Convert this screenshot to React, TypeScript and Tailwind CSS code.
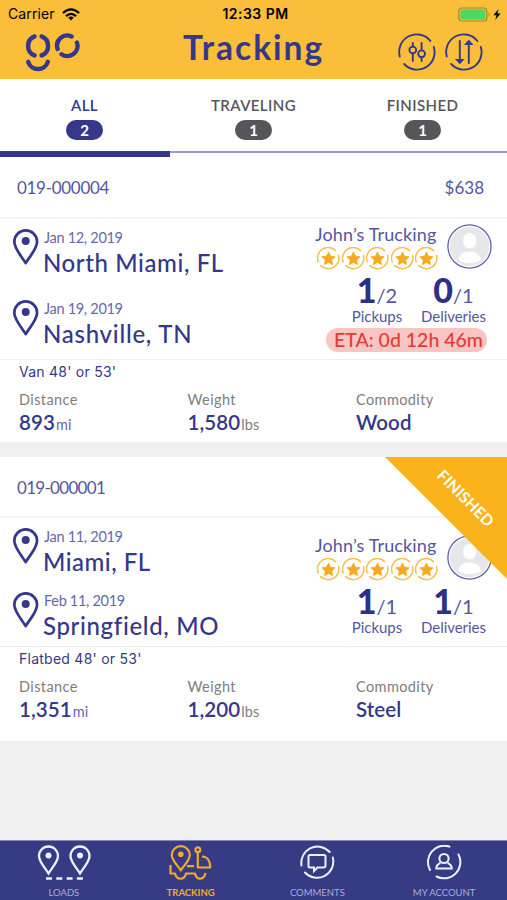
import { ReactNode } from "react"

interface Stop {
  date: string
  city: string
  tracking: string
}

interface Load {
  id: string
  price?: string
  stops: Stop[]
  pickups: [string, string]
  deliveries: [string, string]
  eta?: string
  trailer: string
  distance: string
  weight: string
  commodity: string
  finished?: boolean
}

const loads: Load[] = [
  {
    id: "019-000004",
    price: "$638",
    stops: [
      { date: "Jan 12, 2019", city: "North Miami, FL", tracking: "tracking-[0.6px]" },
      { date: "Jan 19, 2019", city: "Nashville, TN", tracking: "tracking-[0.75px]" },
    ],
    pickups: ["1", "2"],
    deliveries: ["0", "1"],
    eta: "ETA: 0d 12h 46m",
    trailer: "Van 48' or 53'",
    distance: "893",
    weight: "1,580",
    commodity: "Wood",
  },
  {
    id: "019-000001",
    stops: [
      { date: "Jan 11, 2019", city: "Miami, FL", tracking: "tracking-[0.5px]" },
      { date: "Feb 11, 2019", city: "Springfield, MO", tracking: "tracking-[0.65px]" },
    ],
    pickups: ["1", "1"],
    deliveries: ["1", "1"],
    trailer: "Flatbed 48' or 53'",
    distance: "1,351",
    weight: "1,200",
    commodity: "Steel",
    finished: true,
  },
]

export default function App() {
  return (
    <div className="w-[507px] h-[900px] flex flex-col overflow-hidden bg-[#f0f0f0] font-['Lato',sans-serif] text-[#34378a] whitespace-nowrap">
      <Header />
      <Tabs />
      <main className="flex-1 flex flex-col gap-[15px]">
        {loads.map((load) => (
          <LoadCard key={load.id} load={load} />
        ))}
      </main>
      <BottomNav />
    </div>
  )
}

function Header() {
  return (
    <header className="h-[79px] shrink-0 bg-[#fabe3a] flex flex-col">
      {/* Status bar */}
      <div className="h-7 grid grid-cols-3 items-center text-black font-['Inter',sans-serif] text-[14px] leading-none">
        <div className="flex items-center gap-[7px] pl-[8px]">
          <span className="tracking-[0.1px]">Carrier</span>
          <svg width="18" height="13" viewBox="0 0 18 13" fill="none" stroke="black" strokeWidth="2.3">
            <path d="M1 5 Q9 -2.2 17 5" />
            <path d="M4 8.2 Q9 3.6 14 8.2" />
            <path d="M9 12.4 L6.2 9.4 Q9 7.4 11.8 9.4 Z" fill="black" stroke="none" />
          </svg>
        </div>
        <span className="text-center font-semibold tracking-[0.45px] pl-[4px]">12:33 PM</span>
        <div className="flex justify-end items-center pr-[5px]">
          <svg width="44" height="15" viewBox="0 0 44 15">
            <rect x="0.8" y="1" width="28" height="13" rx="3" fill="none" stroke="#a98522" strokeWidth="1.2" />
            <rect x="2.4" y="2.6" width="24.8" height="9.8" rx="1.4" fill="#4bd963" />
            <path d="M30.6 5.4 q2 2.1 0 4.2z" fill="#a98522" />
            <path d="M40.6 2 L35.4 8.2 H38.6 L37.2 13 L42.6 6.6 H39.3 Z" fill="black" />
          </svg>
        </div>
      </div>

      <div className="flex-1 flex items-start pl-[24px] pr-[24px]">
        <svg className="mt-[5px]" width="56" height="40" viewBox="0 0 56 40" fill="none" stroke="#34378a" strokeWidth="4.4" strokeLinecap="round">
          <path d="M10.6 3.4 A10.2 10.2 0 0 0 10.6 22.4" />
          <path d="M17.6 3.4 A10.2 10.2 0 0 1 17.6 22.4" />
          <path d="M4.2 28.8 C7 38.4 20.8 38.4 23.8 28.8" />
          <path d="M33.6 16 A10.2 10.2 0 0 1 47.6 3.5" />
          <path d="M53 9.6 A10.2 10.2 0 0 1 37.5 21.2" />
        </svg>
        <h1 className="ml-[103px] text-[33.5px] leading-[38px] font-bold tracking-[2px]">Tracking</h1>
        <div className="ml-auto flex gap-[9px] mt-[5px]">
          <RingIcon>
            <path d="M14.8 10v3.6M14.8 20.4v7.6M23.6 10v7.4M23.6 24.2v3.8" strokeWidth="1.9" />
            <circle cx="14.8" cy="17" r="3.4" />
            <circle cx="23.6" cy="20.8" r="3.4" />
          </RingIcon>
          <RingIcon>
            <path d="M14.8 8v21M23.8 9.500v20.500" strokeWidth="1.9" />
            <path d="M12.2 27 L14.8 29.8 L17.4 27Z M21.2 11 L23.8 8.2 L26.4 11Z" fill="currentColor" />
          </RingIcon>
        </div>
      </div>
    </header>
  )
}

function RingIcon({ children }: { children: ReactNode }) {
  return (
    <svg width="38" height="38" viewBox="0 0 38 38" fill="none" stroke="currentColor" strokeWidth="1.9" strokeLinecap="round">
      <path d="M1.8 23.5 A17.5 17.5 0 0 1 32.4 8" />
      <path d="M35.8 14 A17.5 17.5 0 0 1 6.2 31" />
      {children}
    </svg>
  )
}

function Tabs() {
  return (
    <div className="h-[78px] shrink-0 bg-white">
      <div className="h-[72px] grid grid-cols-3">
        <Tab label="ALL" count={2} active />
        <Tab label="TRAVELING" count={1} />
        <Tab label="FINISHED" count={1} />
      </div>
      <div className="h-[6px] border-t-2 border-[#9c9cc4]">
        <div className="w-[169.5px] h-[6px] -mt-[2px] bg-[#34378a]" />
      </div>
    </div>
  )
}

function Tab({ label, count, active = false }: { label: string; count: number; active?: boolean }) {
  return (
    <div className={`flex flex-col items-center pt-[16px] ${active ? "text-[#34378a]" : "text-[#55565a]"}`}>
      <span className="text-[15px] leading-5 font-semibold tracking-[0.4px]">{label}</span>
      <span className={`mt-[5px] w-[37px] h-5 rounded-full text-center text-white text-[15px] leading-5 font-bold ${active ? "bg-[#34378a]" : "bg-[#55565a]"}`}>
        {count}
      </span>
    </div>
  )
}

function LoadCard({ load }: { load: Load }) {
  return (
    <section className="relative bg-white">
      <div className={`flex items-center justify-between pl-[17px] pr-[23px] pt-[2px] text-[17px] text-[#5456a0] border-b-2 border-[#f5f5f5] ${load.finished ? "h-[61px]" : "h-[62px]"}`}>
        <span className={load.finished ? "tracking-[-0.7px]" : "tracking-[-0.3px]"}>{load.id}</span>
        <span>{load.price}</span>
      </div>

      <div className={`flex justify-between border-b border-[#ededed] ${load.finished ? "h-[129px]" : "h-[141px]"}`}>
        <div className={`pl-[12px] pt-[8px] flex flex-col ${load.finished ? "gap-[14px]" : "gap-[20.5px]"}`}>
          {load.stops.map((stop) => (
            <div key={stop.date} className="h-[50px] flex gap-[3px]">
              <Pin />
              <div>
                <p className="pl-px text-[14.5px] leading-[22px] text-[#6668aa] tracking-[-0.3px]">{stop.date}</p>
                <p className={`text-[24px] leading-[27px] font-medium ${stop.tracking}`}>{stop.city}</p>
              </div>
            </div>
          ))}
        </div>

        <div className={`w-[193px] ${load.finished ? "pt-[16px]" : "pt-[4px]"}`}>
          <div className="flex gap-[9px]">
            <div className="w-[124px]">
              <p className="pl-px text-[18px] leading-[23px] text-[#5456a0] tracking-[0.15px]">John’s Trucking</p>
              <div className="flex gap-[1.5px] pl-[3px] mt-px">
                {[1, 2, 3, 4, 5].map((n) => (
                  <Star key={n} />
                ))}
              </div>
            </div>
            <Avatar />
          </div>
          <div className="flex mt-[3px]">
            <Counter value={load.pickups} label="Pickups" width="w-[126px]" />
            <Counter value={load.deliveries} label="Deliveries" width="w-[27px]" />
          </div>
          {load.eta && (
            <p className="ml-[12px] mt-[2px] w-[161px] h-6 rounded-full bg-[#f8c5c2] text-[#e33c35] text-center text-[19.5px] leading-6 font-medium pl-[4px]">
              {load.eta}
            </p>
          )}
        </div>
      </div>

      <div className={`pl-[19px] ${load.finished ? "h-[94px]" : "h-[82px]"}`}>
        <p className="pt-[2px] text-[14px] leading-5 font-['Inter',sans-serif] tracking-[0.25px]">{load.trailer}</p>
        <div className="grid grid-cols-[168.5px_168.5px_auto] mt-[8px]">
          <Spec label="Distance" value={load.distance} unit="mi" />
          <Spec label="Weight" value={load.weight} unit="lbs" />
          <Spec label="Commodity" value={load.commodity} />
        </div>
      </div>

      {load.finished && (
        <div className="absolute top-0 right-0 w-[122px] h-[122px] bg-[#fab31a] [clip-path:polygon(0_0,100%_0,100%_100%)]">
          <span className="absolute left-[31px] top-[31px] w-[100px] text-center rotate-45 text-white text-[15.5px] leading-5 font-bold tracking-[0.2px]">
            FINISHED
          </span>
        </div>
      )}
    </section>
  )
}

function Pin() {
  return (
    <svg className="mt-[2px] shrink-0" width="28" height="38" viewBox="0 0 28 38">
      <path d="M13.7 34.2 C10.5 28.3 2.3 20 2.3 12.8 A11.4 11.4 0 0 1 25.1 12.8 C25.1 20 17 28.3 13.7 34.2 Z" fill="none" stroke="#34378a" strokeWidth="2.7" strokeLinejoin="round" />
      <circle cx="13.7" cy="12" r="4" fill="#34378a" />
    </svg>
  )
}

function Star() {
  return (
    <svg width="23" height="23" viewBox="0 0 23 23">
      <path d="M1.2 14.8 A10.6 10.6 0 0 1 18.6 3.6 M21.6 8.6 A10.6 10.6 0 0 1 3.8 18.6" fill="none" stroke="#f9bd50" strokeWidth="1.5" strokeLinecap="round" />
      <path d="M11.5 5 L13.5 9.2 L18.1 9.8 L14.7 13 L15.6 17.6 L11.5 15.4 L7.4 17.6 L8.3 13 L4.9 9.8 L9.5 9.2 Z" fill="#f9a91d" stroke="#f9a91d" strokeWidth="0.8" strokeLinejoin="round" />
    </svg>
  )
}

function Avatar() {
  return (
    <svg className="mt-px -ml-[0.5px]" width="45" height="45" viewBox="0 0 45 45">
      <circle cx="22.5" cy="22.5" r="21.6" fill="white" stroke="#6062a8" strokeWidth="1.3" />
      <circle cx="22.5" cy="22.5" r="19.8" fill="#e5e7eb" />
      <rect x="16.2" y="9" width="13" height="15.5" rx="6.5" fill="white" />
      <path d="M11.3 35.5 C13 29.5 17 27.5 22.5 27.5 S32 29.5 34 35.5 C28 40.5 17 40.5 11.3 35.5Z" fill="white" />
    </svg>
  )
}

function Counter({ value, label, width }: { value: [string, string]; label: string; width: string }) {
  return (
    <div className={`flex flex-col items-center shrink-0 ${width}`}>
      <p className="h-[33px] leading-[33px] flex items-baseline">
        <span className="text-[34px] font-black text-[#2d3086]">{value[0]}</span>
        <span className="text-[20px] text-[#5456a0]">/{value[1]}</span>
      </p>
      <p className="text-[15px] leading-5 text-[#5456a0] tracking-[-0.05px]">{label}</p>
    </div>
  )
}

function Spec({ label, value, unit }: { label: string; value: string; unit?: string }) {
  return (
    <div>
      <p className="text-[14.5px] leading-5 text-[#7d7d80] tracking-[0.4px]">{label}</p>
      <p className="text-[20.5px] leading-6 font-semibold tracking-[0.1px]">
        {value}
        {unit && <span className={`ml-[1px] text-[14.5px] font-normal ${unit === "mi" ? "text-[#6668aa]" : "text-[#7d7d80]"}`}>{unit}</span>}
      </p>
    </div>
  )
}

function BottomNav() {
  return (
    <nav className="h-[60px] shrink-0 grid grid-cols-4 bg-[#373b84] border-t border-[#8486b4] text-[#eef1ff]">
      <NavItem text="LOADS">
        <svg className="ml-[2px]" width="54" height="36" viewBox="0 0 54 36" fill="none" stroke="currentColor" strokeWidth="2.3">
          <path d="M11.5 28.5 C9 24 2 17 2 11 A9.5 9.5 0 0 1 21 11 C21 17 14 24 11.5 28.5Z" />
          <path d="M43 28.5 C40.5 24 33.5 17 33.5 11 A9.5 9.5 0 0 1 52.5 11 C52.5 17 45.5 24 43 28.5Z" />
          <circle cx="11.5" cy="10.5" r="3" fill="currentColor" stroke="none" />
          <circle cx="43" cy="10.5" r="3" fill="currentColor" stroke="none" />
          <path d="M9 33.5H46" strokeWidth="2.6" strokeDasharray="6 4.3" />
        </svg>
      </NavItem>
      <NavItem text="TRACKING" active>
        <svg width="44" height="36" viewBox="0 0 44 36" fill="none" stroke="currentColor" strokeWidth="2.2" strokeLinejoin="round">
          <path d="M12.8 25.5 C10.5 21 3.8 16 3.8 10 A9 8.8 0 0 1 21.8 10 C21.8 16 15 21 12.8 25.5Z" />
          <circle cx="12.8" cy="9.3" r="2.8" fill="currentColor" stroke="none" />
          <circle cx="29.8" cy="4.8" r="2.4" />
          <path d="M29.8 7.2V22.5H42.2 C42.2 15 38.5 11.5 34 11.5M19 21.2H26" />
          <path d="M2.5 20V28.5H7 C8.5 35.5 16.5 35.5 18 28.5H27 C28.5 35.5 36 35.5 37.5 28" />
        </svg>
      </NavItem>
      <NavItem text="COMMENTS">
        <svg width="36" height="36" viewBox="0 0 36 36" fill="none" stroke="currentColor" strokeWidth="2">
          <path d="M2.5 20.5 A16.3 16.3 0 0 1 30.7 7 M33.8 12.5 A16.3 16.3 0 0 1 6 27.5" strokeLinecap="round" />
          <path d="M11 10H25 Q26.5 10 26.5 11.5V20.5 Q26.5 22.5 24.5 22.5H18.5L15 26V22.5H11 Q9.5 22.5 9.5 21V11.5 Q9.5 10 11 10Z" />
        </svg>
      </NavItem>
      <NavItem text="MY ACCOUNT">
        <svg width="36" height="36" viewBox="0 0 36 36" fill="none" stroke="currentColor" strokeWidth="2">
          <path d="M4 25 A16.3 16.3 0 0 1 23.5 1.6 M32.5 9.5 A16.3 16.3 0 0 1 10.5 31.5" strokeLinecap="round" />
          <circle cx="18" cy="13.5" r="4.6" />
          <path d="M14.5 18 C12 19 10.3 20.5 10.3 23.5H25.7 C25.7 20.5 24 19 21.5 18" />
        </svg>
      </NavItem>
    </nav>
  )
}

function NavItem({ text, active = false, children }: { text: string; active?: boolean; children: ReactNode }) {
  return (
    <div className={`flex flex-col items-center pt-[4px] ${active ? "text-[#f3a92f]" : ""}`}>
      {children}
      <span className={`mt-[5px] ml-px leading-[14px] ${active ? "text-[9.5px] font-bold" : "text-[9.5px] text-[#a9acd6]"}`}>{text}</span>
    </div>
  )
}
